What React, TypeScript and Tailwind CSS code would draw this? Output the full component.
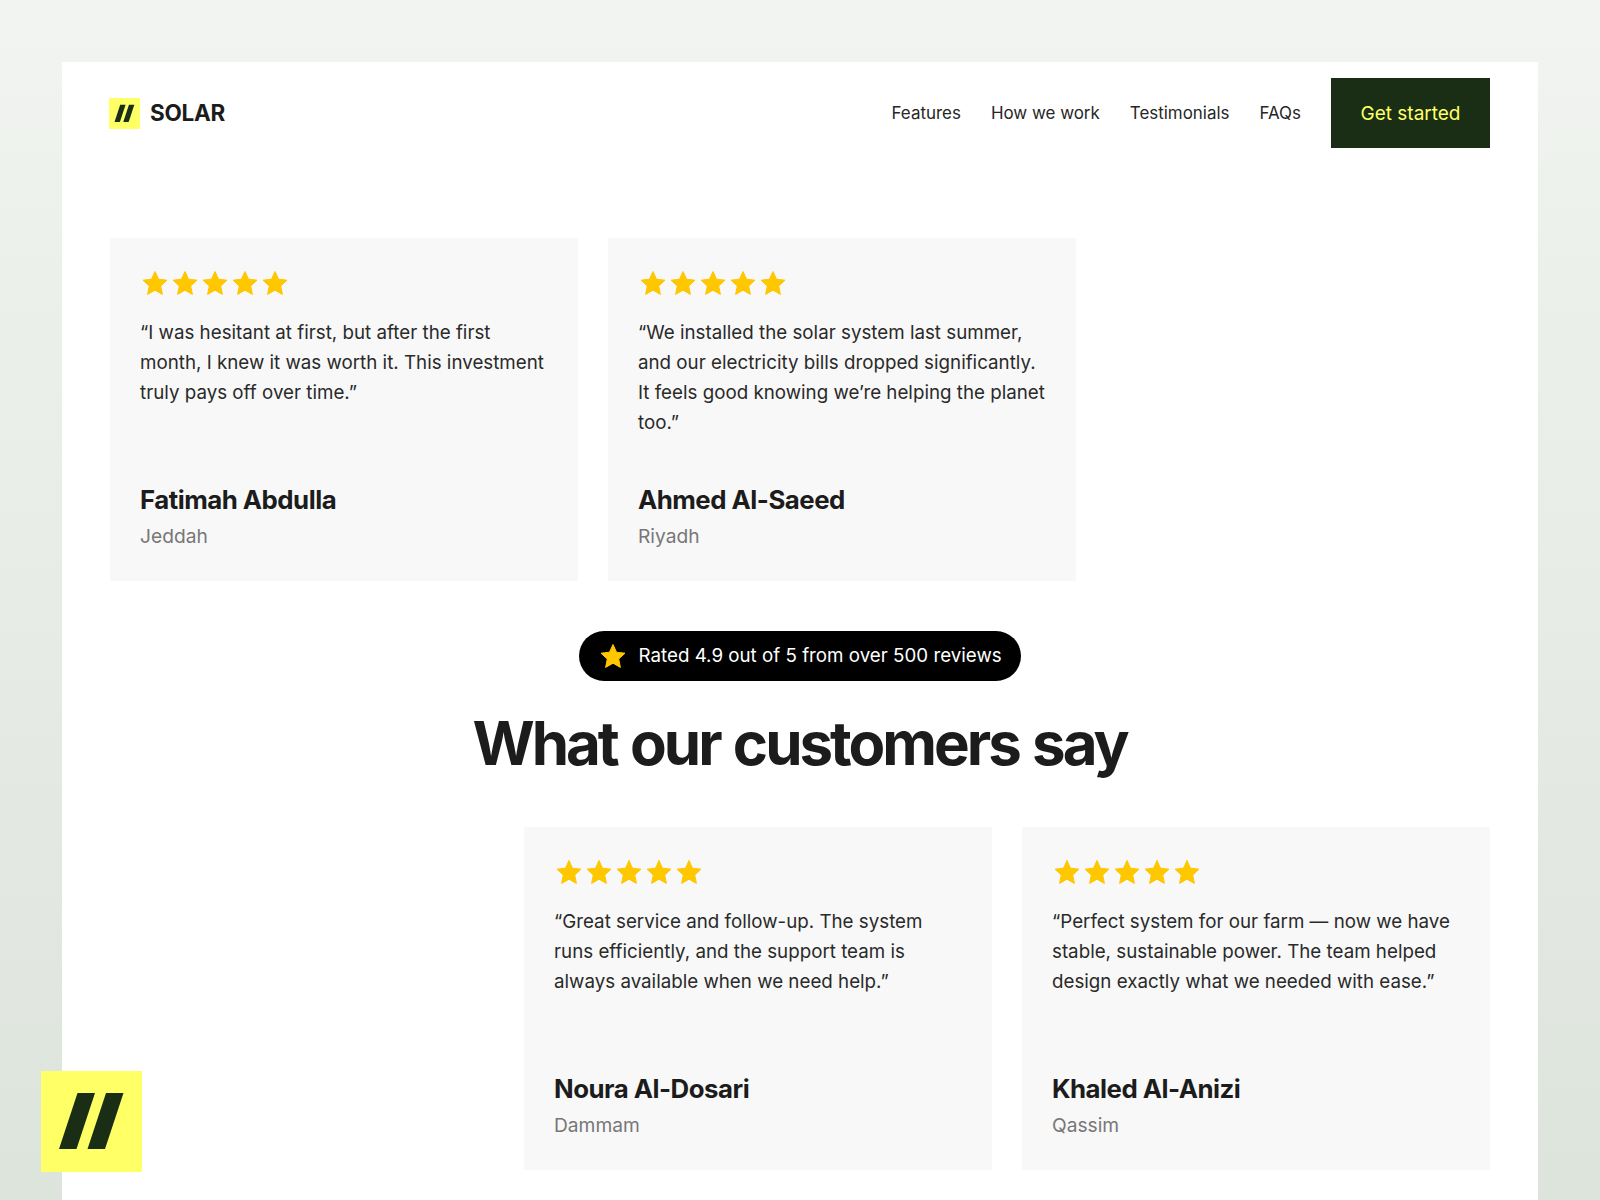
import React from "react";

interface Review {
  quote: string[];
  name: string;
  city: string;
}

const topReviews: Review[] = [
  {
    quote: [
      "“I was hesitant at first, but after the first",
      "month, I knew it was worth it. This investment",
      "truly pays off over time.”",
    ],
    name: "Fatimah Abdulla",
    city: "Jeddah",
  },
  {
    quote: [
      "“We installed the solar system last summer,",
      "and our electricity bills dropped significantly.",
      "It feels good knowing we’re helping the planet",
      "too.”",
    ],
    name: "Ahmed Al-Saeed",
    city: "Riyadh",
  },
];

const bottomReviews: Review[] = [
  {
    quote: [
      "“Great service and follow-up. The system",
      "runs efficiently, and the support team is",
      "always available when we need help.”",
    ],
    name: "Noura Al-Dosari",
    city: "Dammam",
  },
  {
    quote: [
      "“Perfect system for our farm — now we have",
      "stable, sustainable power. The team helped",
      "design exactly what we needed with ease.”",
    ],
    name: "Khaled Al-Anizi",
    city: "Qassim",
  },
];

function Star() {
  return (
    <svg viewBox="0 0 30 30" className="w-[30px] h-[30px] shrink-0">
      <polygon
        points="15,3.5 18.5,11.2 27,12.2 20.7,18 22.4,26.4 15,22.2 7.6,26.4 9.3,18 3,12.2 11.5,11.2"
        fill="#FFC700"
        stroke="#FFC700"
        strokeWidth="1"
        strokeLinejoin="round"
      />
    </svg>
  );
}

function Slashes({ className }: { className: string }) {
  return (
    <svg viewBox="0 0 101 101" className={className}>
      <polygon points="36.5,22 54,22 35.5,78 18,78" fill="#1A2E16" />
      <polygon points="65,22 82.5,22 64,78 46.5,78" fill="#1A2E16" />
    </svg>
  );
}

function ReviewCard({ quote, name, city }: Review) {
  return (
    <div className="w-[468px] h-[343px] bg-[#F8F8F8] pl-[30px] pt-[30px]">
      <div className="flex">
        {[0, 1, 2, 3, 4].map((i) => (
          <Star key={i} />
        ))}
      </div>
      <div className="mt-[20px] h-[120px] text-[18.75px] leading-[30px] text-[#2A2A2A] whitespace-nowrap">
        {quote.map((line) => (
          <p key={line}>{line}</p>
        ))}
      </div>
      <p className="mt-[44px] text-[25.8px] leading-[36px] font-bold tracking-[-0.5px] text-[#1C1C1C]">
        {name}
      </p>
      <p className="mt-[3px] text-[19.2px] leading-[30px] text-[#777777]">{city}</p>
    </div>
  );
}

export default function App() {
  return (
    <div className="relative w-[1600px] h-[1200px] overflow-hidden bg-gradient-to-b from-[#F1F4F0] to-[#DDE4DC] pt-[62px] pl-[62px] font-['Inter',sans-serif]">
      <div className="w-[1476px] h-[1138px] bg-white pl-[47px] pr-[48px] pt-[16px]">
        {/* Nav */}
        <div className="flex items-center justify-between h-[70px]">
          <div className="flex items-center gap-[10px]">
            <div className="w-[31px] h-[31px] bg-[#FFFF66]">
              <Slashes className="w-full h-full" />
            </div>
            <span className="text-[22.5px] font-bold tracking-[-0.3px] text-[#1C1C1C]">SOLAR</span>
          </div>
          <div className="flex items-center gap-[30px] text-[16.95px] text-[#262626]">
            <a className="pt-[2px]">Features</a>
            <a className="pt-[2px]">How we work</a>
            <a className="pt-[2px]">Testimonials</a>
            <a className="pt-[2px]">FAQs</a>
            <button className="w-[159px] h-[70px] pt-[2px] bg-[#1A2E16] text-[19px] text-[#FFFF66]">
              Get started
            </button>
          </div>
        </div>

        <div className="flex gap-[30px] mt-[90px] pl-[1px]">
          {topReviews.map((r) => (
            <ReviewCard key={r.name} {...r} />
          ))}
        </div>

        {/* Rating pill */}
        <div className="flex justify-center mt-[50px]">
          <div className="flex items-center w-[442px] h-[50px] rounded-full bg-black pl-[19px] text-[18.75px] text-white whitespace-nowrap">
            <Star />
            <span className="ml-[11px]">Rated 4.9 out of 5 from over 500 reviews</span>
          </div>
        </div>

        <h1 className="mt-[26px] text-center text-[60px] leading-[72px] font-bold tracking-[-3px] [word-spacing:2px] text-[#1C1C1C]">
          What our customers say
        </h1>

        <div className="flex justify-end gap-[30px] mt-[48px]">
          {bottomReviews.map((r) => (
            <ReviewCard key={r.name} {...r} />
          ))}
        </div>
      </div>

      {/* Corner badge */}
      <div className="absolute left-[41px] top-[1071px] w-[101px] h-[101px] bg-[#FFFF66]">
        <Slashes className="w-full h-full" />
      </div>
    </div>
  );
}
